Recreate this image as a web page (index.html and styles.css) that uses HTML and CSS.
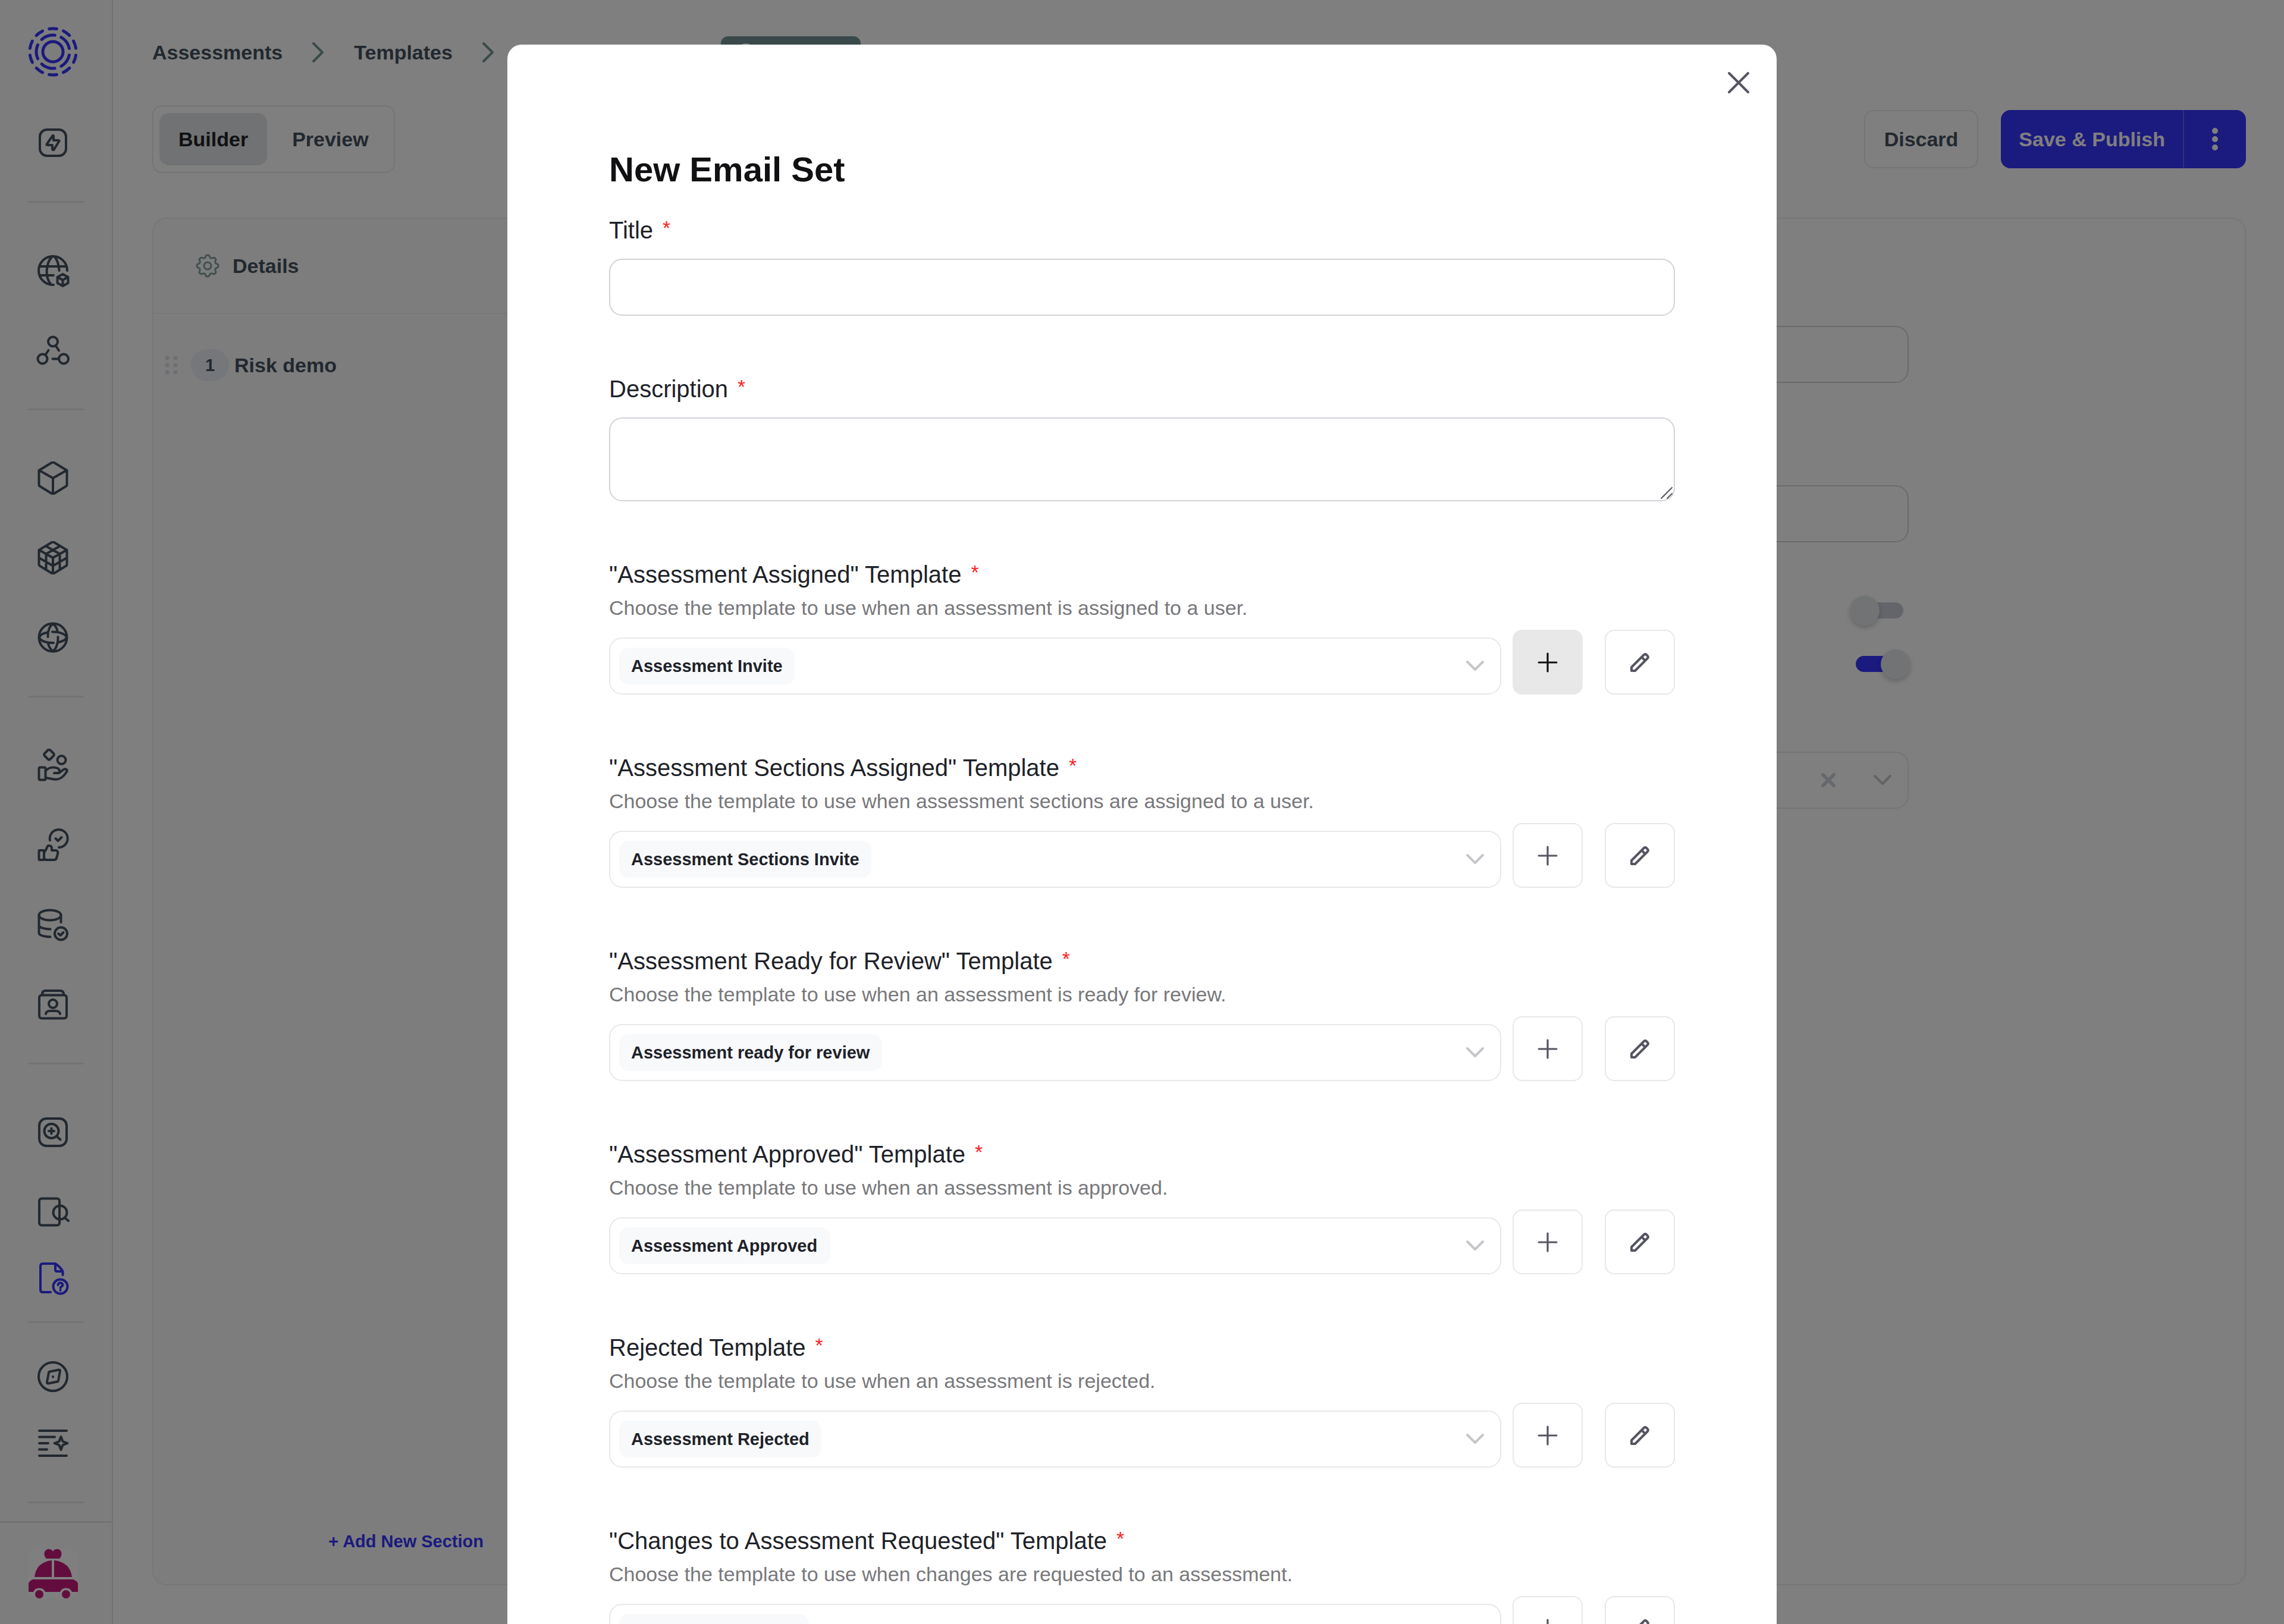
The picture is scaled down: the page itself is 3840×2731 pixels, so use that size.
FILE: index.html
```html
<!DOCTYPE html>
<html lang="en">
<head>
    <meta charset="UTF-8">
    <meta name="viewport" content="width=device-width, initial-scale=1.0">
    <title>New Email Set</title>
    <link rel="stylesheet" href="styles.css">
</head>
<body>

<svg class="sprite" aria-hidden="true">
    <symbol id="plus" viewBox="0 0 32 32"><path d="M16 2v28M2 16h28"/></symbol>
    <symbol id="pencil" viewBox="0 0 34 34"><path d="M3 31v-6L24 4a3 3 0 0 1 4 0l2 2a3 3 0 0 1 0 4L9 31zM20 8l6 6"/></symbol>
    <symbol id="chevron" viewBox="0 0 32 20"><path d="M3 3l13 13L29 3"/></symbol>
    <symbol id="crumb" viewBox="0 0 24 38"><path d="M4 4l15 15L4 34"/></symbol>
</svg>

<div class="app">
    <aside class="sidebar">
        <a class="logo" href="#" aria-label="Home">
            <svg viewBox="-42 -42 84 84">
                <circle r="17"/>
                <circle r="28" pathLength="50" stroke-dasharray="6.8 3.2" transform="rotate(11.5)"/>
                <circle r="39" pathLength="100" stroke-dasharray="5.2 4.8" transform="rotate(8.6)"/>
            </svg>
        </a>
        <nav class="nav">
            <a class="nav-item" href="#" aria-label="Quick actions">
                <svg viewBox="-28 -28 56 56"><rect x="-22" y="-22" width="44" height="44" rx="12"/><path d="M-1-11c1-2 2-1 2 0v7h8c2 0 2 1 1 2L2 11c-1 2-3 1-3 0V4h-8c-2 0-2-1-1-2z"/></svg>
            </a>
            <hr>
            <a class="nav-item" href="#" aria-label="Domains">
                <svg viewBox="-28 -28 56 56"><path d="M1 24A24 24 0 1 1 24 0M-23-7h46M-22 8H1M-1-24C-13-12-13 12-4 22M3-23c5 6 7 14 7.500 23"/><path d="M16.500 6l9 5v10l-9 5-9-5V11zM8 11l8.500 5 8.500-5M16.500 16v9"/></svg>
            </a>
            <a class="nav-item" href="#" aria-label="Relations">
                <svg viewBox="-28 -28 56 56"><circle cy="-14.500" r="8"/><circle cx="-17.500" cy="14.500" r="8"/><circle cx="18" cy="14.500" r="8"/><path d="M4.500-8L10 .5M-7.500 0l-5 7.500M-.5 14.500H10"/></svg>
            </a>
            <hr>
            <a class="nav-item" href="#" aria-label="Assets">
                <svg viewBox="-28 -28 56 56"><path d="M-23.500-13L-2-26q2-1 4 0l21.500 13v24q0 2-2 3L2 26q-2 1-4 0l-19.500-12q-2-1-2-3zM-23-13L0 0l23-13M0 0v26"/></svg>
            </a>
            <a class="nav-item" href="#" aria-label="Asset groups">
                <svg viewBox="-28 -28 56 56"><path d="M-23.500-13L-2-26q2-1 4 0l21.500 13v24q0 2-2 3L2 26q-2 1-4 0l-19.500-12q-2-1-2-3zM-23-13L0 0l23-13M0 0v26M-11.500-19.500L11.500-6.500V20M11.500-19.500l-23 13V20M-23.500 0L0 13.500 23.500 0"/></svg>
            </a>
            <a class="nav-item" href="#" aria-label="Regions">
                <svg viewBox="-28 -28 56 56"><circle r="23.500"/><path d="M0-23c-6 4-9 13-8.500 22M0-23c4 3 7 7 8 14M-1-9.500C11-9.500 21-6 23 0M-9-8.500C-17-7-22-4-23 0M-23 0C-21 6-11 9.500 1 9M8.500-1C9 8 6 19 0 23M-8 10c1 6 4 10 8 13M10 8c8-2 12-5 13-8"/></svg>
            </a>
            <hr>
            <a class="nav-item" href="#" aria-label="Donations">
                <svg viewBox="-28 -28 56 56"><path d="M-8-26q1.500-1 3 0l6 6q1.500 2 0 4l-6 6q-1.500 1-3 0l-6-6q-1.500-2 0-4z"/><circle cx="14.500" cy="-9" r="7"/><rect x="-23.500" y="3.500" width="11" height="21" rx="2"/><path d="M-12 9C-6 2 3 3 8 5c4 2 4 8 0 8H2M10 13l8-6c4-2 7 1 5 4-8 13-16 14-24 12l-11-2"/></svg>
            </a>
            <a class="nav-item" href="#" aria-label="Approvals">
                <svg viewBox="-28 -28 56 56"><path d="M-5-8A15 15 0 1 1 10 4M4.500-11l4 4 6-6"/><rect x="-23.500" y="9" width="8.500" height="16" rx="1"/><path d="M-15 13c2-4 4-5 5-9 1-5 8-3 8 1v4h6c4 0 5 3 4 6l-2 7q-1 3-4 3h-14l-3-2"/></svg>
            </a>
            <a class="nav-item" href="#" aria-label="Data inventory">
                <svg viewBox="-28 -28 56 56"><ellipse cx="-5" cy="-16" rx="18.500" ry="8.500"/><path d="M13.500-16v12M-23.500-16v30c0 4 9 6 19 6.500M-23.500 1c0 4 9 6 19 6.500"/><circle cx="13.500" cy="15" r="10.500"/><path d="M9 15l3.500 3 5-5"/></svg>
            </a>
            <a class="nav-item" href="#" aria-label="Contacts">
                <svg viewBox="-28 -28 56 56"><rect x="-23" y="-15.500" width="46" height="39" rx="4"/><path d="M-18-17q0-6 6-6h24q6 0 6 6"/><circle cy="-1" r="7"/><path d="M-12 16q1-5 7-5H5q6 0 7 5"/></svg>
            </a>
            <hr>
            <a class="nav-item" href="#" aria-label="Discovery">
                <svg viewBox="-28 -28 56 56"><rect x="-23" y="-23" width="46" height="46" rx="12"/><circle cx="-2.500" cy="-2" r="12"/><path d="M6.500 7l6 5.500M-7-2h9M-2.500-6.500v9"/></svg>
            </a>
            <a class="nav-item compact" href="#" aria-label="Document search">
                <svg viewBox="-28 -28 56 56"><rect x="-23" y="-22.500" width="34" height="45" rx="4"/><circle cx="12" cy="1" r="11.500"/><path d="M20 10l6 5"/></svg>
            </a>
            <a class="nav-item compact active" href="#" aria-label="Assessments">
                <svg viewBox="-28 -28 56 56"><path d="M-4 23h-13q-4 0-4-4v-40q0-4 4-4H4q8 5 12.500 13v6M4-25v10q0 3 3 3h9"/><circle cx="12.500" cy="13.500" r="12"/><path d="M8.500 11c0-5 8-5 8 0 0 3-4 2-4 5M12.500 19.500v.5"/></svg>
            </a>
            <hr class="compact">
            <a class="nav-item compact" href="#" aria-label="Explore">
                <svg viewBox="-28 -28 56 56"><circle r="24"/><path d="M-7-7q0-1 2-1.500l15-3q2 0 2 2L9 7q0 1-2 1.500l-15 3q-2 0-2-2zM0 0v.5"/></svg>
            </a>
            <a class="nav-item" href="#" aria-label="Suggestions">
                <svg viewBox="-28 -28 56 56"><path d="M-23-21h46M-23-10.500H3M-23 0h15M-23 10.500h13M-23 21h46M13.500-11l3 8 8 3-8 3-3 8-3-8-8-3 8-3z"/></svg>
            </a>
            <hr>
        </nav>
        <div class="account">
            <button class="avatar" type="button" aria-label="Account">
                <svg viewBox="0 0 84 84"><path d="M31 17c-6-6-4-16 4-16q5 0 7 4 2-4 7-4c8 0 10 10 4 16zM40 20v28H11q3-25 29-28zM44 20v28h30q-3-25-30-28zM8 52h68q8 3 8 8v13H74a11 11 0 0 0-20 0H29a11 11 0 0 0-20 0H1V60q0-5 7-8z"/><circle cx="19" cy="77" r="7"/><circle cx="64" cy="77" r="7"/></svg>
            </button>
        </div>
    </aside>

    <main class="main">
        <nav class="breadcrumb" aria-label="Breadcrumb">
            <a href="#">Assessments</a>
            <svg class="crumb-icon"><use href="#crumb"/></svg>
            <a href="#">Templates</a>
            <svg class="crumb-icon"><use href="#crumb"/></svg>
            <a href="#">Risk Session Demo</a>
            <span class="badge">
                <svg viewBox="0 0 30 30"><circle cx="15" cy="15" r="13"/></svg>
                Published
            </span>
        </nav>

        <div class="toolbar">
            <div class="tabs">
                <button class="tab selected" type="button">Builder</button>
                <button class="tab" type="button">Preview</button>
            </div>
            <div class="actions">
                <button class="btn" type="button">Discard</button>
                <div class="split">
                    <button class="split-main" type="button">Save &amp; Publish</button>
                    <button class="split-more" type="button" aria-label="More">
                        <svg viewBox="0 0 12 40"><circle cx="6" cy="6" r="5"/><circle cx="6" cy="20" r="5"/><circle cx="6" cy="34" r="5"/></svg>
                    </button>
                </div>
            </div>
        </div>

        <div class="panel">
            <div class="sections">
                <div class="details">
                    <svg viewBox="0 0 24 24"><path d="M10.325 4.317c.426-1.756 2.924-1.756 3.350 0a1.724 1.724 0 0 0 2.573 1.066c1.543-.94 3.310.826 2.370 2.370a1.724 1.724 0 0 0 1.065 2.572c1.756.426 1.756 2.924 0 3.350a1.724 1.724 0 0 0-1.066 2.573c.94 1.543-.826 3.310-2.370 2.370a1.724 1.724 0 0 0-2.572 1.065c-.426 1.756-2.924 1.756-3.350 0a1.724 1.724 0 0 0-2.573-1.066c-1.543.94-3.310-.826-2.370-2.370a1.724 1.724 0 0 0-1.065-2.572c-1.756-.426-1.756-2.924 0-3.350a1.724 1.724 0 0 0 1.066-2.573c-.94-1.543.826-3.310 2.370-2.370.996.608 2.296.07 2.572-1.065z"/><circle cx="12" cy="12" r="3"/></svg>
                    Details
                </div>
                <div class="section-row">
                    <svg class="drag" viewBox="0 0 22 32"><circle cx="4" cy="4" r="3.500"/><circle cx="18" cy="4" r="3.500"/><circle cx="4" cy="16" r="3.500"/><circle cx="18" cy="16" r="3.500"/><circle cx="4" cy="28" r="3.500"/><circle cx="18" cy="28" r="3.500"/></svg>
                    <span class="number">1</span>
                    Risk demo
                </div>
                <button class="add-section" type="button">+ Add New Section</button>
            </div>

            <form class="settings">
                <div class="field">
                    <label for="setTitle">Title</label>
                    <input class="input" id="setTitle" type="text">
                </div>
                <div class="field">
                    <label for="setDescription">Description</label>
                    <input class="input" id="setDescription" type="text">
                </div>
                <div class="toggles">
                    <div class="toggle-row">
                        <label for="archived">Archived</label>
                        <input class="toggle" id="archived" type="checkbox">
                    </div>
                    <div class="toggle-row">
                        <label for="locked">Locked</label>
                        <input class="toggle" id="locked" type="checkbox" checked>
                    </div>
                </div>
                <div class="field">
                    <label for="emailSet">Email Set</label>
                    <div class="select-box">
                        <select class="chip" id="emailSet"><option>Default</option></select>
                        <button class="clear" type="button" aria-label="Clear"><svg viewBox="0 0 26 26"><path d="M4 4l18 18M22 4L4 22"/></svg></button>
                        <svg class="chevron"><use href="#chevron"/></svg>
                    </div>
                </div>
            </form>
        </div>
    </main>
</div>

<div class="overlay">
    <div class="modal" role="dialog" aria-labelledby="modalTitle">
        <button class="close" type="button" aria-label="Close">
            <svg viewBox="0 0 40 40"><path d="M4 4l32 32M36 4L4 36"/></svg>
        </button>
        <h1 id="modalTitle">New Email Set</h1>

        <form class="email-form">
            <div class="field">
                <label for="title">Title <span class="required">*</span></label>
                <input class="input" id="title" type="text">
            </div>

            <div class="field">
                <label for="description">Description <span class="required">*</span></label>
                <div class="textarea-wrap">
                    <textarea class="input" id="description"></textarea>
                    <svg class="grip" viewBox="0 0 22 22"><path d="M2 20L20 2M12 20l8-8"/></svg>
                </div>
            </div>

            <div class="field">
                <label for="assigned">"Assessment Assigned" Template <span class="required">*</span></label>
                <p class="hint">Choose the template to use when an assessment is assigned to a user.</p>
                <div class="template-row">
                    <div class="select-box">
                        <select class="chip" id="assigned"><option>Assessment Invite</option></select>
                        <svg class="chevron"><use href="#chevron"/></svg>
                    </div>
                    <button class="icon-btn hover" type="button" aria-label="Add"><svg><use href="#plus"/></svg></button>
                    <button class="icon-btn edit" type="button" aria-label="Edit"><svg><use href="#pencil"/></svg></button>
                </div>
            </div>

            <div class="field">
                <label for="sections">"Assessment Sections Assigned" Template <span class="required">*</span></label>
                <p class="hint">Choose the template to use when assessment sections are assigned to a user.</p>
                <div class="template-row">
                    <div class="select-box">
                        <select class="chip" id="sections"><option>Assessment Sections Invite</option></select>
                        <svg class="chevron"><use href="#chevron"/></svg>
                    </div>
                    <button class="icon-btn" type="button" aria-label="Add"><svg><use href="#plus"/></svg></button>
                    <button class="icon-btn edit" type="button" aria-label="Edit"><svg><use href="#pencil"/></svg></button>
                </div>
            </div>

            <div class="field">
                <label for="review">"Assessment Ready for Review" Template <span class="required">*</span></label>
                <p class="hint">Choose the template to use when an assessment is ready for review.</p>
                <div class="template-row">
                    <div class="select-box">
                        <select class="chip" id="review"><option>Assessment ready for review</option></select>
                        <svg class="chevron"><use href="#chevron"/></svg>
                    </div>
                    <button class="icon-btn" type="button" aria-label="Add"><svg><use href="#plus"/></svg></button>
                    <button class="icon-btn edit" type="button" aria-label="Edit"><svg><use href="#pencil"/></svg></button>
                </div>
            </div>

            <div class="field">
                <label for="approved">"Assessment Approved" Template <span class="required">*</span></label>
                <p class="hint">Choose the template to use when an assessment is approved.</p>
                <div class="template-row">
                    <div class="select-box">
                        <select class="chip" id="approved"><option>Assessment Approved</option></select>
                        <svg class="chevron"><use href="#chevron"/></svg>
                    </div>
                    <button class="icon-btn" type="button" aria-label="Add"><svg><use href="#plus"/></svg></button>
                    <button class="icon-btn edit" type="button" aria-label="Edit"><svg><use href="#pencil"/></svg></button>
                </div>
            </div>

            <div class="field">
                <label for="rejected">Rejected Template <span class="required">*</span></label>
                <p class="hint">Choose the template to use when an assessment is rejected.</p>
                <div class="template-row">
                    <div class="select-box">
                        <select class="chip" id="rejected"><option>Assessment Rejected</option></select>
                        <svg class="chevron"><use href="#chevron"/></svg>
                    </div>
                    <button class="icon-btn" type="button" aria-label="Add"><svg><use href="#plus"/></svg></button>
                    <button class="icon-btn edit" type="button" aria-label="Edit"><svg><use href="#pencil"/></svg></button>
                </div>
            </div>

            <div class="field">
                <label for="changes">"Changes to Assessment Requested" Template <span class="required">*</span></label>
                <p class="hint">Choose the template to use when changes are requested to an assessment.</p>
                <div class="template-row">
                    <div class="select-box">
                        <select class="chip" id="changes"><option>Changes Requested</option></select>
                        <svg class="chevron"><use href="#chevron"/></svg>
                    </div>
                    <button class="icon-btn" type="button" aria-label="Add"><svg><use href="#plus"/></svg></button>
                    <button class="icon-btn edit" type="button" aria-label="Edit"><svg><use href="#pencil"/></svg></button>
                </div>
            </div>
        </form>
    </div>
</div>

</body>
</html>
```
FILE: styles.css
```css
* {
    box-sizing: border-box;
}

body {
    margin: 0;
    height: 100vh;
    overflow: hidden;
    background: #FFFFFF;
    color: #45505E;
    font-family: "Liberation Sans", Arial, sans-serif;
    font-size: 34px;
    font-weight: bold;
}

button, input, select, textarea {
    font: inherit;
    color: inherit;
    margin: 0;
    padding: 0;
    border: 0;
    background: none;
}

svg {
    display: block;
    fill: none;
    stroke: currentColor;
    stroke-width: 4;
    stroke-linecap: round;
    stroke-linejoin: round;
}

a {
    color: inherit;
    text-decoration: none;
}

.sprite {
    display: none;
}

.app {
    display: flex;
    height: 100vh;
}

/* Sidebar */
.sidebar {
    display: flex;
    flex-direction: column;
    flex: none;
    width: 190px;
    background: #FAFAFA;
    border-right: 2px solid #E4E5E8;
}

.logo {
    margin: 45px 47px 67px;
    color: #3634FE;
}

.logo svg {
    width: 84px;
    height: 84px;
    stroke-width: 5;
}

.nav {
    display: flex;
    flex-direction: column;
    flex: 1;
    min-height: 0;
    overflow: hidden;
    padding: 0 47px;
}

.nav-item {
    display: flex;
    align-items: center;
    justify-content: center;
    flex: none;
    width: 84px;
    height: 88px;
    margin-bottom: 46px;
}

.nav-item.compact {
    margin-bottom: 24px;
}

.nav-item.active {
    color: #3634FE;
}

.nav-item svg {
    width: 56px;
    height: 56px;
}

.nav hr {
    flex: none;
    width: 100%;
    height: 3px;
    margin: 8px 0 70px;
    border: 0;
    background: #E6E6E6;
}

.nav hr.compact {
    margin: 4px 0 46px;
}

.account {
    padding: 43px 47px;
    border-top: 3px solid #E6E6E6;
}

.avatar {
    display: block;
    width: 84px;
    height: 84px;
    border-radius: 16px;
    background: #FFFFFF;
}

.avatar svg {
    fill: #C61A7C;
    stroke: none;
}

/* Main */
.main {
    display: flex;
    flex-direction: column;
    flex: 1;
    min-width: 0;
    padding: 60px 64px 65px 66px;
}

.breadcrumb {
    display: flex;
    align-items: center;
    height: 56px;
}

.crumb-icon {
    width: 24px;
    height: 38px;
    margin: 0 48px;
    color: #749494;
}

.badge {
    display: flex;
    align-items: center;
    gap: 12px;
    height: 54px;
    margin-left: 16px;
    padding: 0 27px;
    border-radius: 12px;
    background: #749494;
    color: #FFFFFF;
    font-size: 29px;
}

.badge svg {
    width: 30px;
    height: 30px;
}

.toolbar {
    display: flex;
    align-items: center;
    justify-content: space-between;
    margin: 61px 0 75px;
}

.tabs {
    display: flex;
    gap: 10px;
    padding: 11px 10px;
    border: 2px solid #E8E8E8;
    border-radius: 16px;
}

.tab {
    height: 88px;
    padding: 0 32px;
    border-radius: 16px;
}

.tab.selected {
    background: #E3E4E6;
    color: #222226;
}

.actions {
    display: flex;
    gap: 38px;
}

.btn {
    height: 98px;
    padding: 0 32px;
    border: 2px solid #E8E8E8;
    border-radius: 16px;
}

.split {
    display: flex;
    height: 98px;
    overflow: hidden;
    border-radius: 16px;
    background: #3634FE;
    color: #FFFFFF;
}

.split-main {
    padding: 0 30px;
    border-right: 2px solid #5C5AFE;
}

.split-more {
    width: 104px;
}

.split-more svg {
    width: 12px;
    height: 40px;
    margin: 0 auto;
    fill: currentColor;
    stroke: none;
}

.panel {
    display: flex;
    flex: 1;
    border: 2px solid #EDEDED;
    border-radius: 24px;
    overflow: hidden;
}

.sections {
    display: flex;
    flex-direction: column;
    flex: none;
    width: 600px;
    background: #FAFAFA;
}

.details {
    display: flex;
    align-items: center;
    gap: 18px;
    height: 160px;
    padding-left: 67px;
    border-bottom: 2px solid #EFF0F3;
}

.details svg {
    width: 48px;
    height: 48px;
    stroke-width: 1.5;
    color: #80A09E;
}

.section-row {
    display: flex;
    align-items: center;
    height: 172px;
    padding-left: 19px;
}

.drag {
    width: 22px;
    height: 32px;
    fill: #D8DCE4;
    stroke: none;
}

.number {
    width: 64px;
    margin: 0 9px 0 22px;
    border-radius: 27px;
    background: #EAEEF4;
    font-size: 29px;
    line-height: 54px;
    text-align: center;
}

.add-section {
    margin: auto 45px 44px auto;
    color: #3634FE;
    font-size: 29px;
    line-height: 56px;
}

.settings {
    flex: none;
    width: 1786px;
    margin: 0 auto;
    padding-top: 104px;
}

.settings .field {
    margin-bottom: 96px;
}

.settings .field label {
    margin-bottom: 20px;
}

.settings .input {
    border-color: #D0D5DD;
}

.toggles {
    margin: -27px 9px 27px 0;
}

.toggle-row {
    display: flex;
    align-items: center;
    justify-content: flex-end;
    gap: 160px;
    height: 90px;
    font-size: 29px;
}

.toggle {
    position: relative;
    appearance: none;
    width: 80px;
    height: 27px;
    border-radius: 14px;
    background: #C8CAD6;
}

.toggle::before {
    content: "";
    position: absolute;
    top: -11px;
    left: -10px;
    width: 50px;
    height: 50px;
    border-radius: 50%;
    background: #E2E6EA;
    box-shadow: 0 4px 8px rgba(0, 0, 0, 0.2);
}

.toggle:checked {
    background: #3634FE;
}

.toggle:checked::before {
    left: 42px;
}

.clear {
    margin: 0 62px 0 auto;
    color: #CDD1DA;
}

.clear svg {
    width: 26px;
    height: 26px;
    stroke-width: 6;
}

.clear + .chevron {
    margin-left: 0;
}

/* Modal */
.overlay {
    position: fixed;
    inset: 0;
    display: flex;
    align-items: flex-start;
    justify-content: center;
    overflow: hidden;
    padding-top: 75px;
    background: rgba(0, 0, 0, 0.5);
}

.modal {
    position: relative;
    width: 2134px;
    max-width: calc(100% - 64px);
    padding: 174px 171px;
    border-radius: 24px;
    background: #FFFFFF;
    color: #1E2228;
}

.close {
    position: absolute;
    top: 44px;
    right: 44px;
    color: #555562;
}

.close svg {
    width: 40px;
    height: 40px;
}

h1 {
    margin: 0 0 38px;
    color: #111114;
    font-size: 58px;
    line-height: 72px;
}

.field {
    margin-bottom: 95px;
}

.field label {
    display: flex;
    gap: 16px;
    font-size: 40px;
    font-weight: normal;
    line-height: 56px;
}

.required {
    color: #FF2222;
    font-size: 34px;
    line-height: 48px;
}

.input {
    display: block;
    width: 100%;
    height: 96px;
    padding: 0 32px;
    border: 2px solid #D2D3D9;
    border-radius: 22px;
}

.email-form .input {
    margin-top: 20px;
}

.textarea-wrap {
    position: relative;
}

textarea.input {
    height: 141px;
    resize: none;
}

.grip {
    position: absolute;
    right: 3px;
    bottom: 3px;
    width: 22px;
    height: 22px;
    stroke-width: 2;
    color: #55565E;
}

.hint {
    margin: 0 0 9px;
    color: #77787B;
    font-weight: normal;
    line-height: 56px;
}

.template-row {
    display: flex;
    align-items: flex-end;
}

.select-box {
    display: flex;
    align-items: center;
    flex: 1;
    height: 96px;
    padding: 0 26px 0 15px;
    border: 2px solid #E8E8E8;
    border-radius: 22px;
}

.chip {
    appearance: none;
    height: 62px;
    padding: 0 20px;
    border-radius: 16px;
    background: #F8F9FB;
    font-size: 29px;
}

.chevron {
    width: 32px;
    height: 20px;
    margin-left: auto;
    color: #C6C6CA;
}

.icon-btn {
    display: flex;
    align-items: center;
    justify-content: center;
    width: 118px;
    height: 109px;
    margin-left: 19px;
    border: 2px solid #E8E8E8;
    border-radius: 16px;
    color: #555562;
}

.icon-btn.edit {
    margin-left: 37px;
}

.icon-btn.hover {
    background: #E8E8E8;
    color: #111114;
}

.icon-btn svg {
    width: 34px;
    height: 34px;
    stroke-width: 3;
}

.icon-btn.edit svg {
    stroke-width: 4;
}
```
